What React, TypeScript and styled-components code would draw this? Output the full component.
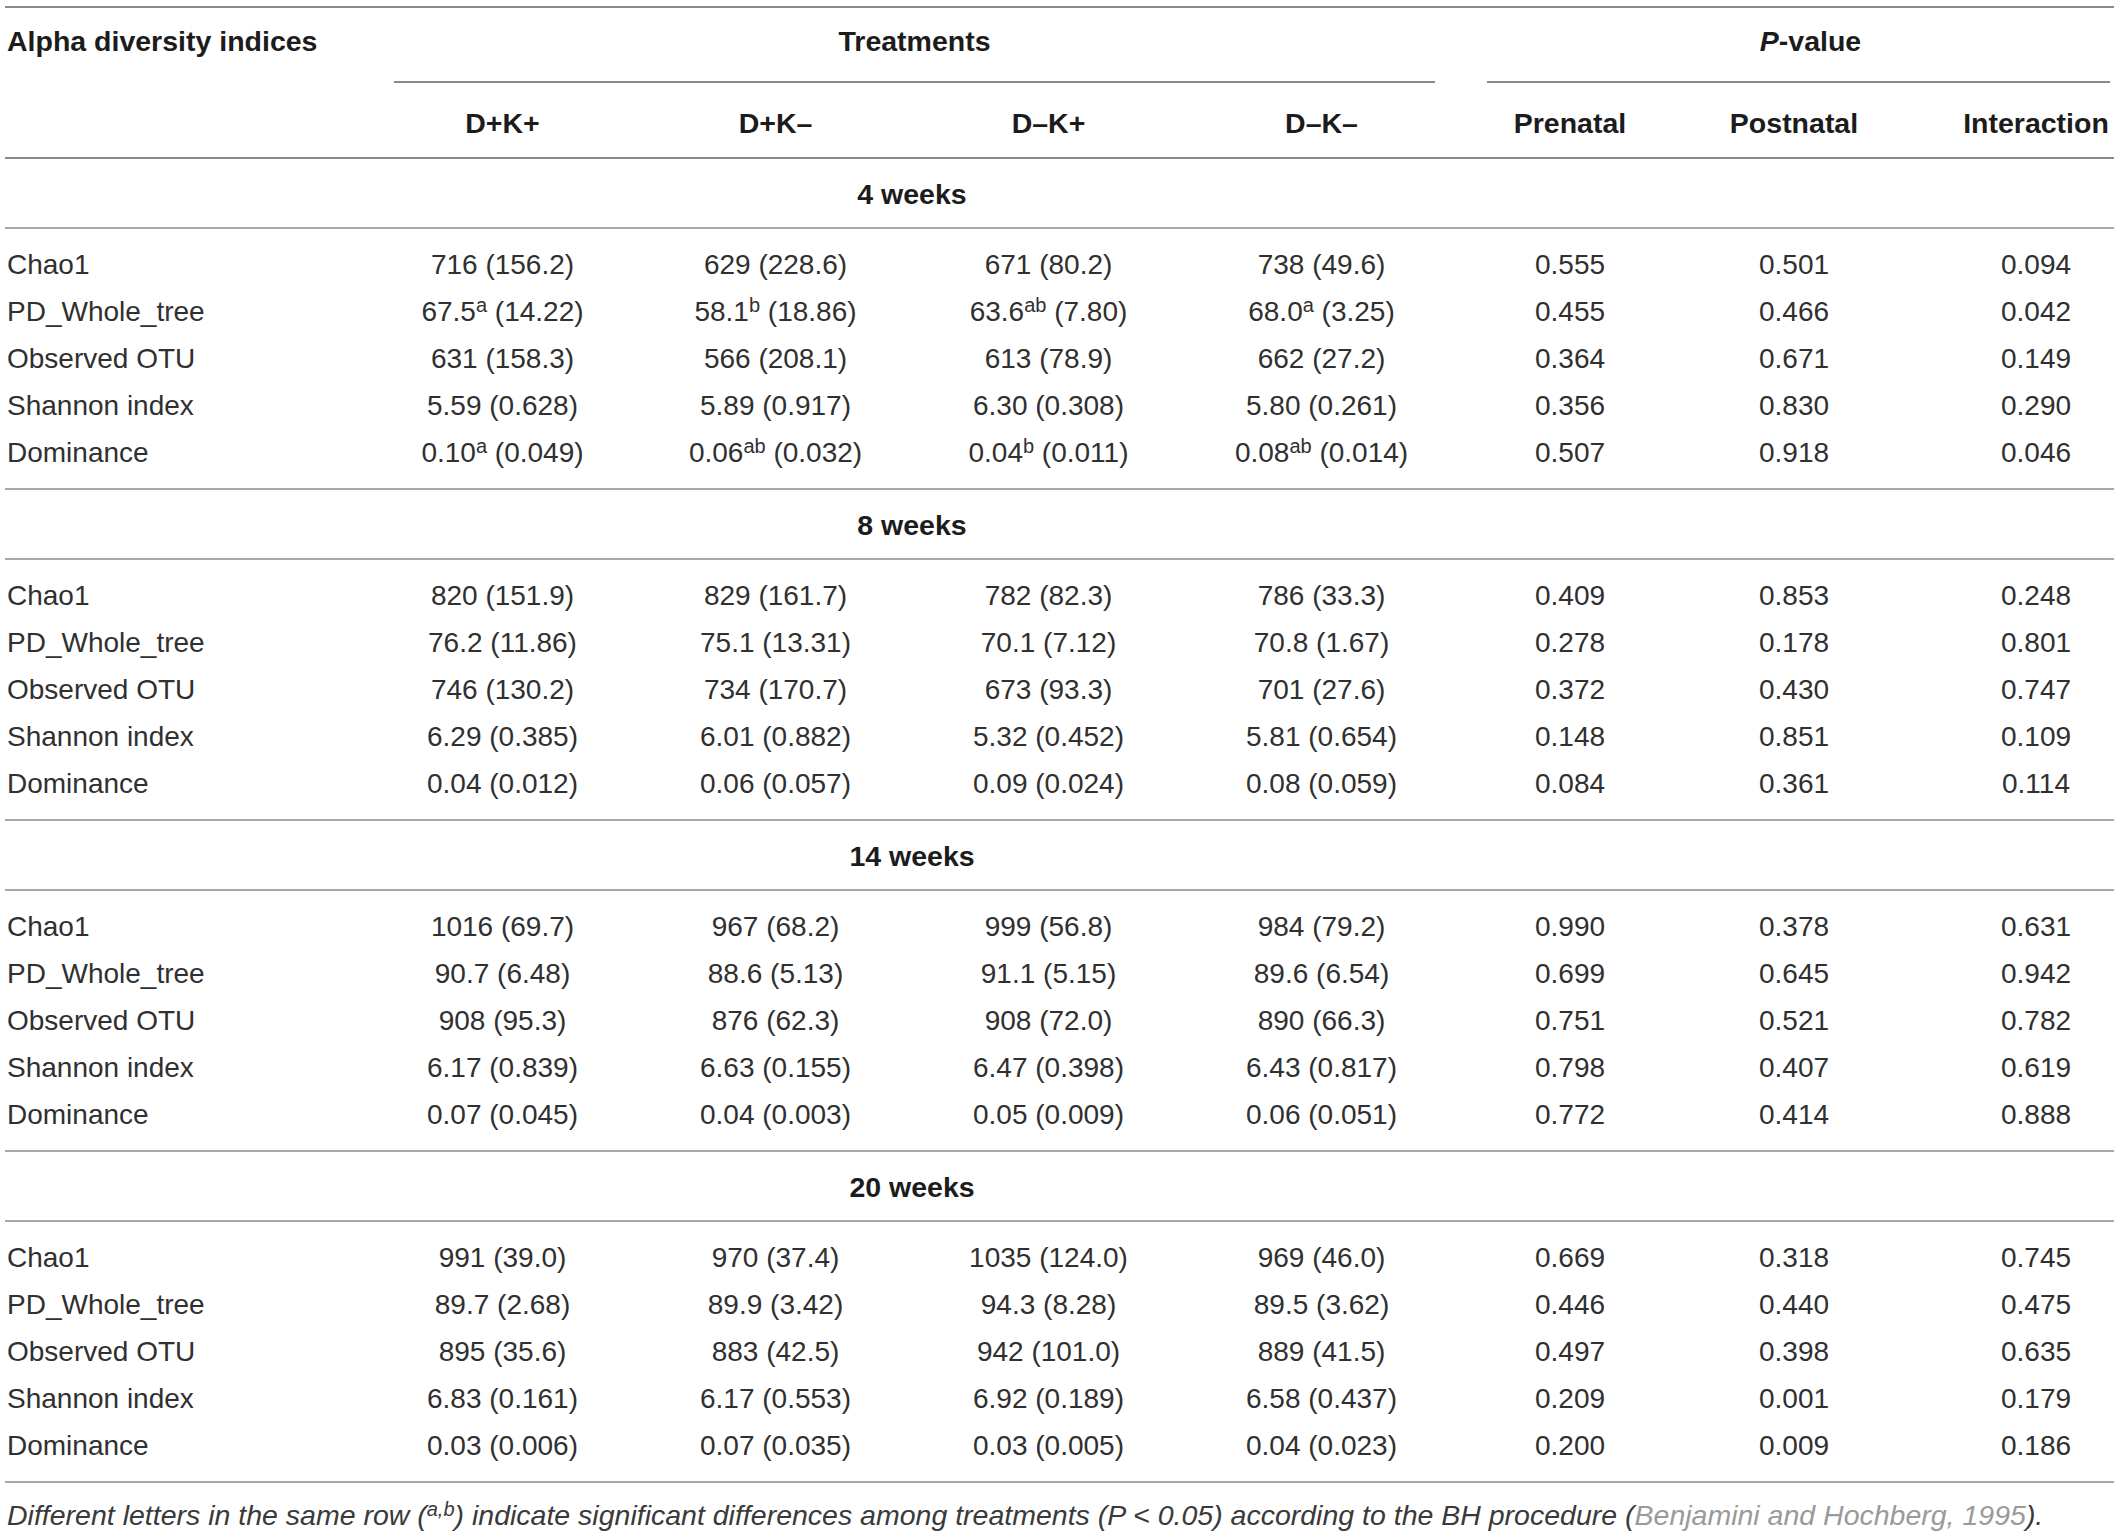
import React from "react";
import styled, { createGlobalStyle, css } from "styled-components";

const GlobalStyle = createGlobalStyle`
  html, body {
    margin: 0;
    padding: 0;
    background: #ffffff;
  }
  body {
    font-family: "Liberation Sans", Arial, sans-serif;
    color: #303030;
  }
`;

const columns = css`
  display: grid;
  grid-template-columns: 361px repeat(4, 273px) 224px 224px 208px;
`;

const Page = styled.div`
  padding: 6px 0 0 5px;
  width: 2109px;
`;

const Table = styled.div`
  border-top: 2px solid #8a8a8a;
  border-bottom: 2px solid #a8a8a8;
`;

const Header = styled.div`
  ${columns};
  grid-template-rows: 75px 74px;
  border-bottom: 2px solid #8a8a8a;
  font-weight: 700;
  font-size: 28.5px;
  color: #1c1c1c;
`;

const IndexHead = styled.div`
  grid-column: 1;
  grid-row: 1 / span 2;
  padding: 16px 0 0 2px;
  line-height: 34px;
`;

const GroupHead = styled.div<{ $start: number; $end: number; $ml: number; $mr: number; $pl?: number }>`
  grid-column: ${(p) => p.$start} / ${(p) => p.$end};
  grid-row: 1;
  margin: 0 ${(p) => p.$mr}px 0 ${(p) => p.$ml}px;
  padding: 16px 0 0 ${(p) => p.$pl ?? 0}px;
  box-sizing: border-box;
  height: 75px;
  line-height: 34px;
  text-align: center;
  border-bottom: 2px solid #8a8a8a;
`;

const Italic = styled.span`
  font-style: italic;
`;

const ColHead = styled.div<{ $pl?: number }>`
  grid-row: 2;
  padding: 23px 0 0 ${(p) => p.$pl ?? 0}px;
  line-height: 34px;
  text-align: center;
`;

const SectionHeading = styled.div`
  ${columns};
  height: 68px;
  border-bottom: 2px solid #a8a8a8;
  font-weight: 700;
  font-size: 28.5px;
  color: #1c1c1c;
`;

const SectionTitle = styled.div`
  grid-column: 2 / 6;
  padding-top: 1px;
  line-height: 68px;
  text-align: center;
`;

const RowGroup = styled.div<{ $last?: boolean }>`
  padding: 12px 0;
  border-bottom: ${(p) => (p.$last ? "none" : "2px solid #a8a8a8")};
`;

const Row = styled.div`
  ${columns};
  height: 47px;
  font-size: 28px;
  line-height: 47px;
  color: #303030;
`;

const Label = styled.div`
  padding-left: 2px;
  text-align: left;
  white-space: nowrap;
`;

const Cell = styled.div<{ $pl?: number }>`
  text-align: center;
  white-space: nowrap;
  padding-left: ${(p) => p.$pl ?? 0}px;
`;

const Sup = styled.sup`
  font-size: 20px;
  line-height: 0;
  vertical-align: 9px;
`;

const Footnote = styled.p`
  margin: 0;
  padding: 15px 0 0 2px;
  line-height: 34px;
  font-size: 28.5px;
  font-style: italic;
  color: #3a3a3a;
  white-space: nowrap;
`;

const Cite = styled.span`
  color: #9a9a9a;
`;

type Section = { title: string; rows: string[][] };

const labels = ["Chao1", "PD_Whole_tree", "Observed OTU", "Shannon index", "Dominance"];

const sections: Section[] = [
  {
    title: "4 weeks",
    rows: [
      ["716 (156.2)", "629 (228.6)", "671 (80.2)", "738 (49.6)", "0.555", "0.501", "0.094"],
      ["67.5^a (14.22)", "58.1^b (18.86)", "63.6^ab (7.80)", "68.0^a (3.25)", "0.455", "0.466", "0.042"],
      ["631 (158.3)", "566 (208.1)", "613 (78.9)", "662 (27.2)", "0.364", "0.671", "0.149"],
      ["5.59 (0.628)", "5.89 (0.917)", "6.30 (0.308)", "5.80 (0.261)", "0.356", "0.830", "0.290"],
      ["0.10^a (0.049)", "0.06^ab (0.032)", "0.04^b (0.011)", "0.08^ab (0.014)", "0.507", "0.918", "0.046"],
    ],
  },
  {
    title: "8 weeks",
    rows: [
      ["820 (151.9)", "829 (161.7)", "782 (82.3)", "786 (33.3)", "0.409", "0.853", "0.248"],
      ["76.2 (11.86)", "75.1 (13.31)", "70.1 (7.12)", "70.8 (1.67)", "0.278", "0.178", "0.801"],
      ["746 (130.2)", "734 (170.7)", "673 (93.3)", "701 (27.6)", "0.372", "0.430", "0.747"],
      ["6.29 (0.385)", "6.01 (0.882)", "5.32 (0.452)", "5.81 (0.654)", "0.148", "0.851", "0.109"],
      ["0.04 (0.012)", "0.06 (0.057)", "0.09 (0.024)", "0.08 (0.059)", "0.084", "0.361", "0.114"],
    ],
  },
  {
    title: "14 weeks",
    rows: [
      ["1016 (69.7)", "967 (68.2)", "999 (56.8)", "984 (79.2)", "0.990", "0.378", "0.631"],
      ["90.7 (6.48)", "88.6 (5.13)", "91.1 (5.15)", "89.6 (6.54)", "0.699", "0.645", "0.942"],
      ["908 (95.3)", "876 (62.3)", "908 (72.0)", "890 (66.3)", "0.751", "0.521", "0.782"],
      ["6.17 (0.839)", "6.63 (0.155)", "6.47 (0.398)", "6.43 (0.817)", "0.798", "0.407", "0.619"],
      ["0.07 (0.045)", "0.04 (0.003)", "0.05 (0.009)", "0.06 (0.051)", "0.772", "0.414", "0.888"],
    ],
  },
  {
    title: "20 weeks",
    rows: [
      ["991 (39.0)", "970 (37.4)", "1035 (124.0)", "969 (46.0)", "0.669", "0.318", "0.745"],
      ["89.7 (2.68)", "89.9 (3.42)", "94.3 (8.28)", "89.5 (3.62)", "0.446", "0.440", "0.475"],
      ["895 (35.6)", "883 (42.5)", "942 (101.0)", "889 (41.5)", "0.497", "0.398", "0.635"],
      ["6.83 (0.161)", "6.17 (0.553)", "6.92 (0.189)", "6.58 (0.437)", "0.209", "0.001", "0.179"],
      ["0.03 (0.006)", "0.07 (0.035)", "0.03 (0.005)", "0.04 (0.023)", "0.200", "0.009", "0.186"],
    ],
  },
];

const colHeads = ["D+K+", "D+K\u2013", "D\u2013K+", "D\u2013K\u2013", "Prenatal", "Postnatal", "Interaction"];

function Value({ text }: { text: string }) {
  const m = text.match(/^([^\^]*)\^(\S+)(.*)$/);
  if (!m) return <>{text}</>;
  return (
    <>
      {m[1]}
      <Sup>{m[2]}</Sup>
      {m[3]}
    </>
  );
}

export default function App() {
  return (
    <>
      <GlobalStyle />
      <Page>
        <Table>
          <Header>
            <IndexHead>Alpha diversity indices</IndexHead>
            <GroupHead $start={2} $end={6} $ml={28} $mr={23}>
              Treatments
            </GroupHead>
            <GroupHead $start={6} $end={9} $ml={29} $mr={4} $pl={24}>
              <Italic>P</Italic>-value
            </GroupHead>
            {colHeads.map((h, i) => (
              <ColHead key={h} style={{ gridColumn: i + 2 }} $pl={i === 6 ? 52 : 0}>
                {h}
              </ColHead>
            ))}
          </Header>
          {sections.map((s, si) => (
            <React.Fragment key={s.title}>
              <SectionHeading>
                <SectionTitle>{s.title}</SectionTitle>
              </SectionHeading>
              <RowGroup $last={si === sections.length - 1}>
                {s.rows.map((r, ri) => (
                  <Row key={ri}>
                    <Label>{labels[ri]}</Label>
                    {r.map((v, ci) => (
                      <Cell key={ci} $pl={ci === 6 ? 52 : 0}>
                        <Value text={v} />
                      </Cell>
                    ))}
                  </Row>
                ))}
              </RowGroup>
            </React.Fragment>
          ))}
        </Table>
        <Footnote>
          Different letters in the same row (<Sup>a,b</Sup>) indicate significant differences among treatments (P
          {" < "}0.05) according to the BH procedure (<Cite>Benjamini and Hochberg, 1995</Cite>).
        </Footnote>
      </Page>
    </>
  );
}
